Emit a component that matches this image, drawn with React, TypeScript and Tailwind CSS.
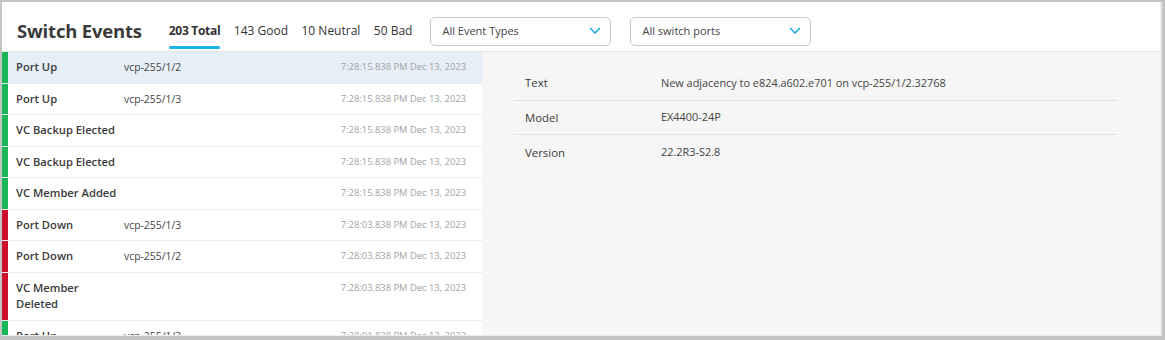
import React from "react";

type Ev = { name: string; port?: string; time: string; ok: boolean; selected?: boolean };

const events: Ev[] = [
  { name: "Port Up", port: "vcp-255/1/2", time: "7:28:15.838 PM Dec 13, 2023", ok: true, selected: true },
  { name: "Port Up", port: "vcp-255/1/3", time: "7:28:15.838 PM Dec 13, 2023", ok: true },
  { name: "VC Backup Elected", time: "7:28:15.838 PM Dec 13, 2023", ok: true },
  { name: "VC Backup Elected", time: "7:28:15.838 PM Dec 13, 2023", ok: true },
  { name: "VC Member Added", time: "7:28:15.838 PM Dec 13, 2023", ok: true },
  { name: "Port Down", port: "vcp-255/1/3", time: "7:28:03.838 PM Dec 13, 2023", ok: false },
  { name: "Port Down", port: "vcp-255/1/2", time: "7:28:03.838 PM Dec 13, 2023", ok: false },
  { name: "VC Member Deleted", time: "7:28:03.838 PM Dec 13, 2023", ok: false },
  { name: "Port Up", port: "vcp-255/1/3", time: "7:28:01.838 PM Dec 13, 2023", ok: true },
];

function Chevron() {
  return (
    <svg width="12" height="8" viewBox="0 0 12 8" fill="none">
      <path d="M1.5 1.5 L6 6 L10.5 1.5" stroke="#1ea7e4" strokeWidth="1.6" strokeLinecap="round" strokeLinejoin="round" />
    </svg>
  );
}

function Select({ label }: { label: string }) {
  return (
    <div className="flex h-[29px] w-[181px] items-center justify-between rounded-[5px] border border-[#c9c9c9] bg-white pl-[11px] pr-[9px] text-[11px] text-[#444]">
      <span>{label}</span>
      <Chevron />
    </div>
  );
}

export default function App() {
  return (
    <div
      className="h-[340px] w-[1165px] overflow-hidden bg-[#c4c4c4] pl-[2px] pt-[2px] pr-[3px] pb-[4px]"
      style={{ fontFamily: '"Open Sans", "Noto Sans", sans-serif' }}
    >
      <div className="flex h-full flex-col overflow-hidden border-r-[2px] border-b-[1px] border-[#ececec] bg-white">
        <div className="flex h-[50px] shrink-0 items-center border-b border-[#e6e6e6] pl-[15px] pt-[9px]">
          <div className="text-[18.5px] font-bold leading-none tracking-[-0.2px] text-[#3a3a3a]">Switch Events</div>
          <div className="ml-[27px] flex h-full items-center gap-[13.5px] text-[12px] text-[#333]">
            <div className="relative flex h-full items-center font-bold tracking-[-0.3px]">
              203 Total
              <div className="absolute bottom-[2px] left-0 right-0 h-[3px] rounded-full bg-[#1bb3f0]" />
            </div>
            <div>143 Good</div>
            <div>10 Neutral</div>
            <div>50 Bad</div>
          </div>
          <div className="ml-[18px] flex gap-[19px]">
            <Select label="All Event Types" />
            <Select label="All switch ports" />
          </div>
        </div>
        <div className="flex min-h-0 flex-1">
          <div className="w-[480px] shrink-0 overflow-hidden">
            {events.map((e, i) => (
              <div key={i} className="flex border-b border-[#ececec]">
                <div className={`w-[6px] shrink-0 ${e.ok ? "bg-[#1ab559]" : "bg-[#c8102e]"}`} />
                <div
                  className={`flex flex-1 items-start py-[7px] pl-[8px] pr-[16px] leading-[16.5px] ${
                    e.selected ? "bg-[#e6eff8]" : "bg-white"
                  }`}
                >
                  <div className="w-[108px] shrink-0 pr-[4px] text-[11.2px] font-semibold text-[#3a3a3a]">{e.name}</div>
                  <div className="flex-1 text-[10.4px] text-[#444]">{e.port ?? ""}</div>
                  <div className="text-[9.4px] text-[#a3a3a3]">{e.time}</div>
                </div>
              </div>
            ))}
          </div>
          <div className="flex-1 bg-[#f6f6f6] pl-[32px] pr-[43px] pt-[14px]">
            {[
              ["Text", "New adjacency to e824.a602.e701 on vcp-255/1/2.32768"],
              ["Model", "EX4400-24P"],
              ["Version", "22.2R3-S2.8"],
            ].map(([k, v], i) => (
              <div
                key={k}
                className={`flex h-[34.5px] items-center text-[10.9px] text-[#444] ${i < 2 ? "border-b border-[#e3e3e3]" : ""}`}
              >
                <div className="w-[147px] pl-[11px] text-[11.4px] font-medium text-[#3a3a3a]">{k}</div>
                <div>{v}</div>
              </div>
            ))}
          </div>
        </div>
      </div>
    </div>
  );
}
